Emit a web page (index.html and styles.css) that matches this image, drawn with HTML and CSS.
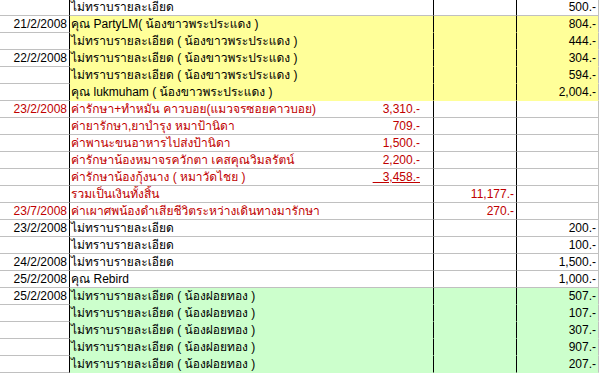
FILE: index.html
```html
<!DOCTYPE html>
<html lang="th">
<head>
<meta charset="utf-8">
<title>Sheet</title>
<link rel="stylesheet" href="styles.css">
</head>
<body>
<div class="sheet">
  <div class="row"><div class="a"></div><div class="b"><span class="t">ไม่ทราบรายละเอียด</span></div><div class="d"></div><div class="e">500.-</div></div>
  <div class="row yellow"><div class="a">21/2/2008</div><div class="b"><span class="t">คุณ PartyLM( น้องขาวพระประแดง )</span></div><div class="d"></div><div class="e">804.-</div></div>
  <div class="row yellow"><div class="a"></div><div class="b"><span class="t">ไม่ทราบรายละเอียด ( น้องขาวพระประแดง )</span></div><div class="d"></div><div class="e">444.-</div></div>
  <div class="row yellow"><div class="a">22/2/2008</div><div class="b"><span class="t">ไม่ทราบรายละเอียด ( น้องขาวพระประแดง )</span></div><div class="d"></div><div class="e">304.-</div></div>
  <div class="row yellow"><div class="a"></div><div class="b"><span class="t">ไม่ทราบรายละเอียด ( น้องขาวพระประแดง )</span></div><div class="d"></div><div class="e">594.-</div></div>
  <div class="row yellow"><div class="a"></div><div class="b"><span class="t">คุณ lukmuham ( น้องขาวพระประแดง )</span></div><div class="d"></div><div class="e">2,004.-</div></div>
  <div class="row red"><div class="a">23/2/2008</div><div class="b"><span class="t">ค่ารักษา+ทำหมัน คาวบอย(แมวจรซอยคาวบอย)</span><span class="c">3,310.-</span></div><div class="d"></div><div class="e"></div></div>
  <div class="row red"><div class="a"></div><div class="b"><span class="t">ค่ายารักษา,ยาบำรุง หมาป้านิดา</span><span class="c">709.-</span></div><div class="d"></div><div class="e"></div></div>
  <div class="row red"><div class="a"></div><div class="b"><span class="t">ค่าพานะขนอาหารไปส่งป้านิดา</span><span class="c">1,500.-</span></div><div class="d"></div><div class="e"></div></div>
  <div class="row red"><div class="a"></div><div class="b"><span class="t">ค่ารักษาน้องหมาจรควักตา เคสคุณวิมลรัตน์</span><span class="c">2,200.-</span></div><div class="d"></div><div class="e"></div></div>
  <div class="row red"><div class="a"></div><div class="b"><span class="t">ค่ารักษาน้องกุ้งนาง ( หมาวัดไชย )</span><span class="c ul">   3,458.-</span></div><div class="d"></div><div class="e"></div></div>
  <div class="row red"><div class="a"></div><div class="b"><span class="t">รวมเป็นเงินทั้งสิ้น</span></div><div class="d">11,177.-</div><div class="e"></div></div>
  <div class="row red"><div class="a">23/7/2008</div><div class="b"><span class="t">ค่าเผาศพน้องดำเสียชีวิตระหว่างเดินทางมารักษา</span></div><div class="d">270.-</div><div class="e"></div></div>
  <div class="row"><div class="a">23/2/2008</div><div class="b"><span class="t">ไม่ทราบรายละเอียด</span></div><div class="d"></div><div class="e">200.-</div></div>
  <div class="row"><div class="a"></div><div class="b"><span class="t">ไม่ทราบรายละเอียด</span></div><div class="d"></div><div class="e">100.-</div></div>
  <div class="row"><div class="a">24/2/2008</div><div class="b"><span class="t">ไม่ทราบรายละเอียด</span></div><div class="d"></div><div class="e">1,500.-</div></div>
  <div class="row"><div class="a">25/2/2008</div><div class="b"><span class="t">คุณ Rebird</span></div><div class="d"></div><div class="e">1,000.-</div></div>
  <div class="row green"><div class="a">25/2/2008</div><div class="b"><span class="t">ไม่ทราบรายละเอียด ( น้องฝอยทอง )</span></div><div class="d"></div><div class="e">507.-</div></div>
  <div class="row green"><div class="a"></div><div class="b"><span class="t">ไม่ทราบรายละเอียด ( น้องฝอยทอง )</span></div><div class="d"></div><div class="e">107.-</div></div>
  <div class="row green"><div class="a"></div><div class="b"><span class="t">ไม่ทราบรายละเอียด ( น้องฝอยทอง )</span></div><div class="d"></div><div class="e">307.-</div></div>
  <div class="row green"><div class="a"></div><div class="b"><span class="t">ไม่ทราบรายละเอียด ( น้องฝอยทอง )</span></div><div class="d"></div><div class="e">907.-</div></div>
  <div class="row green"><div class="a"></div><div class="b"><span class="t">ไม่ทราบรายละเอียด ( น้องฝอยทอง )</span></div><div class="d"></div><div class="e">207.-</div></div>
</div>
</body>
</html>
```
FILE: styles.css
```css
html, body {
  margin: 0;
  padding: 0;
  background: #ffffff;
}
.sheet {
  margin-top: -1px;
  width: 600px;
  font-family: "Tahoma", "Liberation Sans", "Loma", "Garuda", "Noto Sans Thai", "Noto Sans", sans-serif;
  font-size: 12px;
  color: #000000;
}
.row {
  display: grid;
  grid-template-columns: 70px 364px 83px 82px;
  height: 17px;
}
.row > div {
  box-sizing: border-box;
  height: 17px;
  line-height: 16px;
  white-space: nowrap;
  overflow: hidden;
  border-bottom: 1px solid #c0c0c0;
  border-right: 1px solid #000000;
}
.a {
  text-align: right;
  padding-right: 2px;
}
.b {
  display: flex;
  padding-left: 1px;
}
.b .t {
  flex: 1 1 auto;
  overflow: visible;
}
.c {
  flex: 0 0 auto;
  padding-right: 13px;
  white-space: pre;
}
.c.ul {
  text-decoration: underline;
  text-underline-offset: 1px;
}
.d, .e {
  text-align: right;
  padding-right: 2px;
}
.row > .e {
  border-right-color: #c0c0c0;
}
.yellow > .b, .yellow > .d, .yellow > .e {
  background: #ffff99;
  border-bottom-color: #ffff99;
}
.green > .b, .green > .d, .green > .e {
  background: #ccffcc;
  border-bottom-color: #ccffcc;
}
.row.yellow:nth-child(6) > .b,
.row.yellow:nth-child(6) > .d,
.row.yellow:nth-child(6) > .e {
  border-bottom-color: #ffff99;
}
.red {
  color: #c00000;
}
```
